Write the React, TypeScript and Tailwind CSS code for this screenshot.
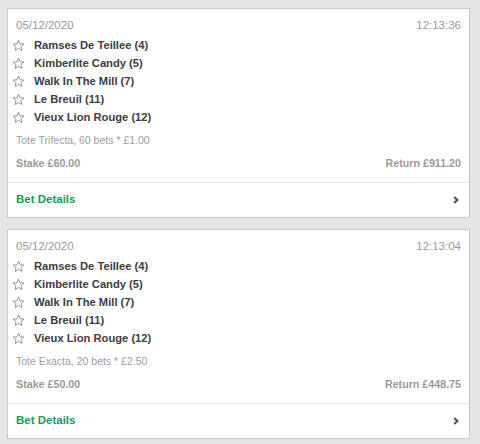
import React from "react";

type Bet = {
  date: string;
  time: string;
  runners: string[];
  betType: string;
  stake: string;
  returns: string;
};

const bets: Bet[] = [
  {
    date: "05/12/2020",
    time: "12:13:36",
    runners: [
      "Ramses De Teillee (4)",
      "Kimberlite Candy (5)",
      "Walk In The Mill (7)",
      "Le Breuil (11)",
      "Vieux Lion Rouge (12)",
    ],
    betType: "Tote Trifecta, 60 bets * £1.00",
    stake: "Stake £60.00",
    returns: "Return £911.20",
  },
  {
    date: "05/12/2020",
    time: "12:13:04",
    runners: [
      "Ramses De Teillee (4)",
      "Kimberlite Candy (5)",
      "Walk In The Mill (7)",
      "Le Breuil (11)",
      "Vieux Lion Rouge (12)",
    ],
    betType: "Tote Exacta, 20 bets * £2.50",
    stake: "Stake £50.00",
    returns: "Return £448.75",
  },
];

function StarIcon() {
  return (
    <svg width="13" height="13" viewBox="0 0 24 24" className="shrink-0">
      <polygon
        points="12,2.2 14.9,8.8 22,9.4 16.6,14.1 18.2,21.2 12,17.5 5.8,21.2 7.4,14.1 2,9.4 9.1,8.8"
        fill="none"
        stroke="#777"
        strokeWidth="1.4"
      />
    </svg>
  );
}

function Chevron() {
  return (
    <svg width="8" height="10" viewBox="0 0 8 10">
      <polyline points="2.2,2 5.4,5 2.2,8" fill="none" stroke="#555" strokeWidth="2.2" />
    </svg>
  );
}

function BetCard({ bet }: { bet: Bet }) {
  return (
    <div className="bg-white border border-[#c9c9c9]">
      <div className="pt-[8px] pb-[11px] px-[8px]">
        <div className="flex justify-between text-[11.5px] leading-[16px] text-[#9a9a9a]">
          <span>{bet.date}</span>
          <span>{bet.time}</span>
        </div>
        <div className="mt-[3px] flex flex-col">
          {bet.runners.map((r) => (
            <div key={r} className="flex items-center h-[18px] gap-[9px] -ml-[4px]">
              <StarIcon />
              <span className="text-[11.2px] font-bold text-[#3d3d3d]">{r}</span>
            </div>
          ))}
        </div>
        <div className="mt-[6px] text-[10.5px] leading-[16px] text-[#9e9e9e]">{bet.betType}</div>
        <div className="mt-[7px] flex justify-between text-[10.7px] leading-[16px] font-bold text-[#9a9a9a]">
          <span>{bet.stake}</span>
          <span>{bet.returns}</span>
        </div>
      </div>
      <div className="border-t border-[#e6e6e6] h-[35px] flex items-center justify-between pl-[8px] pr-[9px]">
        <span className="text-[11.5px] font-bold text-[#17995c]">Bet Details</span>
        <Chevron />
      </div>
    </div>
  );
}

export default function App() {
  return (
    <div
      className="min-h-screen bg-[#e5e5e5] pt-[8px] pl-[7px] pr-[10px] flex flex-col gap-[11px]"
      style={{ fontFamily: '"Liberation Sans", Arial, sans-serif' }}
    >
      {bets.map((b) => (
        <BetCard key={b.time} bet={b} />
      ))}
    </div>
  );
}
